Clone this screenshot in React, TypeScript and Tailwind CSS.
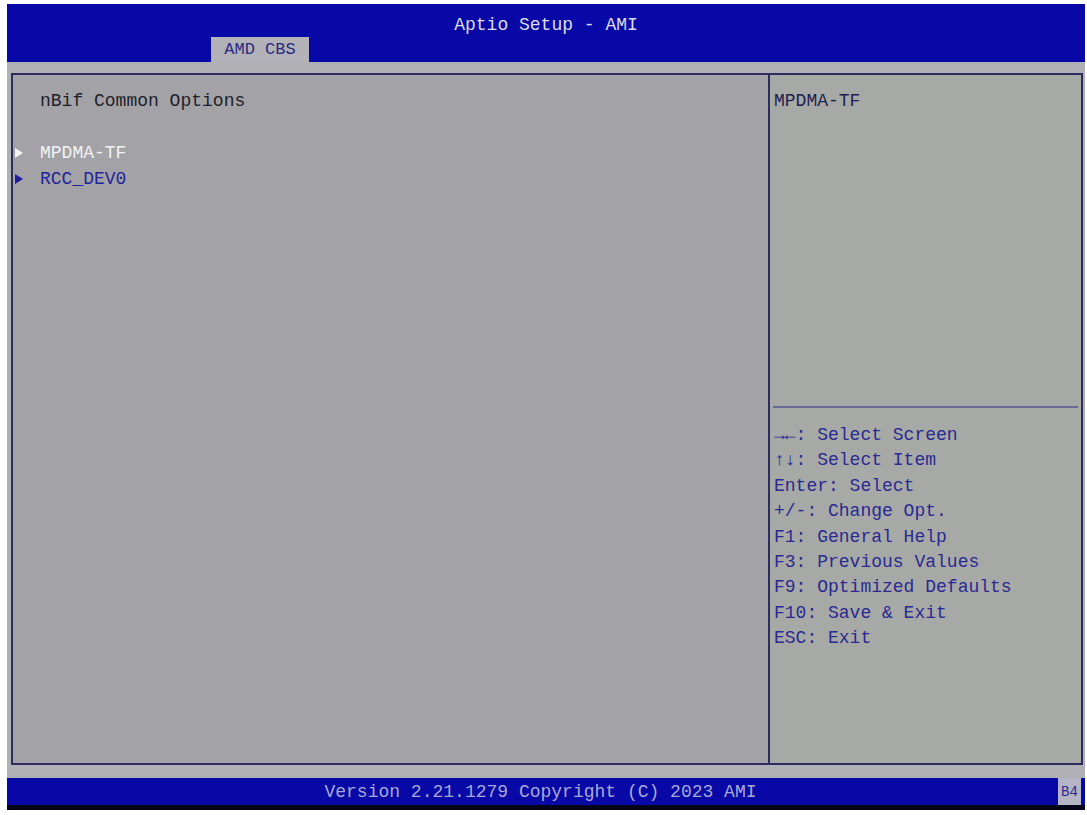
const mono = "font-['Liberation_Mono','DejaVu_Sans_Mono',monospace]";

const helpLines = [
  '\u2192\u2190: Select Screen',
  '\u2191\u2193: Select Item',
  'Enter: Select',
  '+/-: Change Opt.',
  'F1: General Help',
  'F3: Previous Values',
  'F9: Optimized Defaults',
  'F10: Save & Exit',
  'ESC: Exit',
];

function Arrow({ color }: { color: string }) {
  return (
    <svg width="8" height="10" viewBox="0 0 8 10" className="shrink-0">
      <path d="M0 0 L8 5 L0 10 Z" fill={color} />
    </svg>
  );
}

function MenuItem({ label, selected }: { label: string; selected?: boolean }) {
  return (
    <div className="flex h-[26px] items-center">
      <div className="flex w-[27px] pl-[2px]">
        <Arrow color={selected ? '#f4f4f4' : '#1c1c9c'} />
      </div>
      <span className={selected ? 'text-[#f2f2f2]' : 'text-[#24249a]'}>{label}</span>
    </div>
  );
}

export default function App() {
  return (
    <div className={`h-[815px] w-[1087px] bg-white pl-[7px] pr-[2px] pt-[4px] ${mono} text-[18px] leading-[26px]`}>
      <div className="flex h-[806px] w-[1078px] flex-col">
        {/* header */}
        <div className="flex h-[58px] flex-col bg-[#0808a6]">
          <div className="flex h-[33px] justify-center pt-[8px] text-[#dcdcf0]">Aptio Setup - AMI</div>
          <div className="flex h-[25px] pl-[204px]">
            <div className="flex w-[98px] items-center justify-center bg-[#b2b2b8] text-[17px] text-[#2a2a80]">
              AMD CBS
            </div>
          </div>
        </div>

        {/* body */}
        <div className="flex flex-1 flex-col bg-[#b1b1b5] pl-[4px] pr-[2px] pt-[11px] pb-[13px]">
          <div className="flex flex-1 border-2 border-[#2c2c5e]">
            <div className="flex w-[755px] flex-col bg-[#a3a3a7] pt-[13px]">
              <div className="pl-[27px] text-[#1e1e2a]">nBif Common Options</div>
              <div className="h-[26px]" />
              <MenuItem label="MPDMA-TF" selected />
              <MenuItem label="RCC_DEV0" />
            </div>
            <div className="w-[2px] bg-[#2c2c5e]" />
            <div className="flex flex-1 flex-col bg-[#a7a9a6]">
              <div className="h-[331px] pl-[4px] pt-[13px] text-[#1e1e50]">MPDMA-TF</div>
              <div className="mx-[3px] h-[2px] bg-[#6b6b95]" />
              <div className="flex flex-col pl-[4px] pt-[15px] text-[#2a2a92] leading-[25.4px]">
                {helpLines.map((l) => (
                  <div key={l}>{l}</div>
                ))}
              </div>
            </div>
          </div>
        </div>

        {/* footer */}
        <div className="flex h-[27px] items-center bg-[#0808a6]">
          <div className="flex flex-1 justify-center pl-[16px] text-[#a8a8d8]">
            Version 2.21.1279 Copyright (C) 2023 AMI
          </div>
          <div className="mr-[4px] flex h-full w-[23px] items-center justify-center bg-[#b4b4c4] text-[14px] text-[#2a2a90]">
            B4
          </div>
        </div>
        <div className="h-[5px] bg-[#05051a]" />
      </div>
    </div>
  );
}
